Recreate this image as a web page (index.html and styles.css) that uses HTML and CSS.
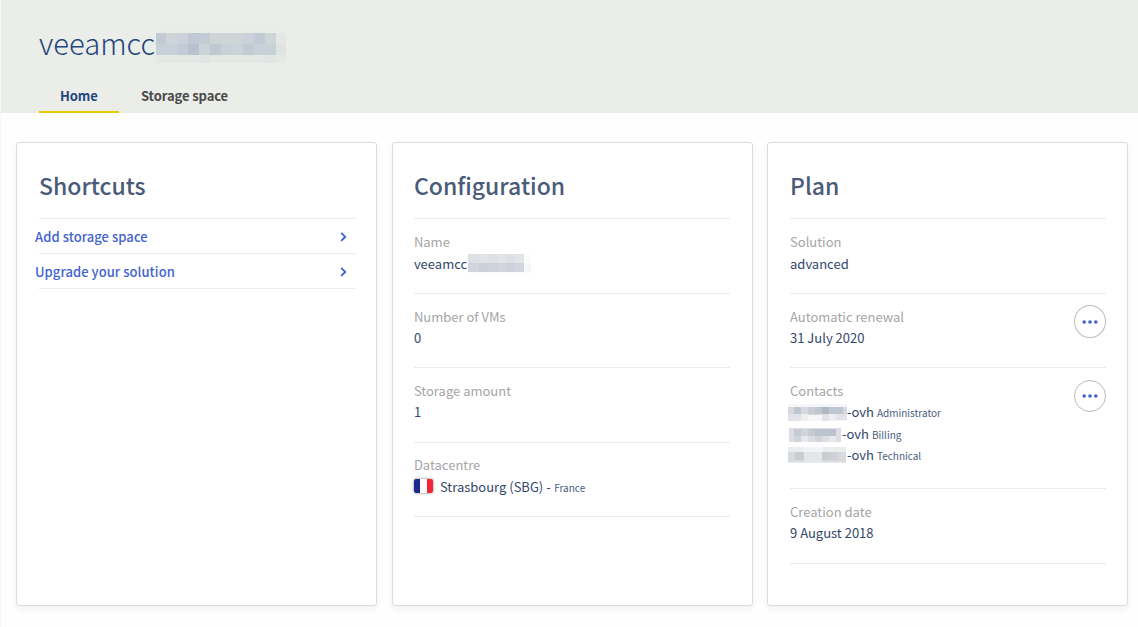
FILE: index.html
```html
<!DOCTYPE html>
<html lang="en">
<head>
<meta charset="utf-8">
<title>veeamcc</title>
<link rel="stylesheet" href="styles.css">
</head>
<body>
<header class="header">
  <h1 class="service">veeamcc<svg class="mask-title" width="130" height="37" viewBox="0 0 130 37" shape-rendering="crispEdges" aria-hidden="true">
    <path fill="#eaece8" d="M0 0h130v37H0z"/>
    <path fill="#e5e8e5" d="M0 29h130v8H0z"/>
    <path fill="#e1e5e3" d="M43 29h11v8H43zM109 29h11v8H109z"/>
    <path fill="#e4e7e6" d="M120 7h10v11h-10z"/>
    <path fill="#dfe3e2" d="M120 18h10v11h-10z"/>
    <path fill="#c8d0d8" d="M0 7h120v22H0z"/>
    <path fill="#c2cad4" d="M0 7h10v11H0zM98 7h11v11H98zM87 18h11v11H87z"/>
    <path fill="#cdd5d7" d="M10 7h11v11H10zM54 7h11v11H54zM65 7h11v11H65zM76 7h11v11H76zM109 7h11v11h-11z"/>
    <path fill="#cad1da" d="M21 7h11v11H21zM87 7h11v11H87z"/>
    <path fill="#c0c9d3" d="M32 7h11v11H32z"/>
    <path fill="#c3cbd6" d="M43 7h11v11H43zM21 18h11v11H21z"/>
    <path fill="#b7c2cf" d="M32 18h11v11H32z"/>
    <path fill="#cad3d7" d="M43 18h11v11H43zM76 18h11v11H76z"/>
    <path fill="#bfcad0" d="M54 18h11v11H54z"/>
  </svg></h1>
  <nav class="tabs">
    <a class="tab tab-active">Home</a>
    <a class="tab">Storage space</a>
  </nav>
</header>

<main class="cards">
  <section class="card">
    <h2 class="card-title">Shortcuts</h2>
    <a class="shortcut"><span>Add storage space</span><svg class="chevron" width="8" height="10" viewBox="0 0 8 10"><path d="M1.2 .9 5.2 4.9 1.2 8.9"/></svg></a>
    <a class="shortcut"><span>Upgrade your solution</span><svg class="chevron" width="8" height="10" viewBox="0 0 8 10"><path d="M1.2 .9 5.2 4.9 1.2 8.9"/></svg></a>
  </section>

  <section class="card card-middle">
    <h2 class="card-title">Configuration</h2>
    <dl class="row row-roomy">
      <dt>Name</dt>
      <dd>veeamcc<svg class="mask-name" width="63" height="19" viewBox="0 0 63 19" shape-rendering="crispEdges" aria-hidden="true">
        <path fill="#fbfbfc" d="M0 0h63v19H0z"/>
        <path fill="#f6f6f8" d="M56 10h8v8h-8z"/>
        <path fill="#dee0e5" d="M0 0h56v10H0z"/>
        <path fill="#e2e4e8" d="M11 0h9v10h-9zM29 0h9v10h-9zM47 0h9v10h-9z"/>
        <path fill="#d2d5de" d="M0 9h56v9H0z"/>
        <path fill="#cbd0d9" d="M11 9h9v9h-9z"/>
        <path fill="#cfd2dc" d="M20 9h9v9h-9zM38 9h9v9h-9z"/>
      </svg></dd>
    </dl>
    <dl class="row row-short"><dt>Number of VMs</dt><dd>0</dd></dl>
    <dl class="row"><dt>Storage amount</dt><dd>1</dd></dl>
    <dl class="row row-place">
      <dt>Datacentre</dt>
      <dd><span class="flag"></span>Strasbourg (SBG) - <small>France</small></dd>
    </dl>
  </section>

  <section class="card">
    <h2 class="card-title">Plan</h2>
    <dl class="row row-roomy"><dt>Solution</dt><dd>advanced</dd></dl>
    <div class="row row-short row-action">
      <dl><dt>Automatic renewal</dt><dd>31 July 2020</dd></dl>
      <button class="more more-raised" aria-label="Actions"><svg width="16" height="4" viewBox="0 0 16 4"><circle cx="2.2" cy="2" r="1.8"/><circle cx="8" cy="2" r="1.8"/><circle cx="13.8" cy="2" r="1.8"/></svg></button>
    </div>
    <div class="row row-contacts row-action">
      <dl>
        <dt>Contacts</dt>
        <dd class="contact"><svg class="mask-contact" width="59" height="17" viewBox="0 0 59 17" shape-rendering="crispEdges" aria-hidden="true">
          <path fill="#f5f6f7" d="M0 0h59v17H0z"/>
          <path fill="#d6d9df" d="M0 3h59v8H0z"/>
          <path fill="#c0c6cf" d="M6 3h7v7H6zM27 3h7v7h-7zM41 3h14v7H41z"/>
          <path fill="#c9ced6" d="M20 3h7v7h-7z"/>
          <path fill="#b1b8c4" d="M34 3h7v7h-7z"/>
          <path fill="#e2e3e8" d="M0 10h13v7H0zM34 10h7v7h-7zM48 10h11v6H48z"/>
          <path fill="#eceef0" d="M13 10h7v7h-7zM41 10h7v7h-7z"/>
        </svg>-ovh <small>Administrator</small></dd>
        <dd class="contact contact-tall"><svg class="mask-contact mask-billing" width="52" height="14" viewBox="0 0 52 14" shape-rendering="crispEdges" aria-hidden="true">
          <path fill="#dddee4" d="M0 0h52v14H0z"/>
          <path fill="#c5cad3" d="M5 1h7v7H5zM19 1h7v7h-7z"/>
          <path fill="#bcc3ce" d="M26 1h21v7H26z"/>
          <path fill="#d0d4db" d="M12 1h7v7h-7zM5 8h7v6H5zM26 8h7v6h-7z"/>
          <path fill="#e7e8ec" d="M12 8h7v6h-7zM40 8h7v6h-7z"/>
        </svg>-ovh <small>Billing</small></dd>
        <dd class="contact"><svg class="mask-contact mask-technical" width="59" height="17" viewBox="0 0 59 17" shape-rendering="crispEdges" aria-hidden="true">
          <path fill="#ebecee" d="M0 1h58v16H0z"/>
          <path fill="#f2f3f4" d="M15 1h20v5H15z"/>
          <path fill="#d8dae0" d="M0 6h58v10H0z"/>
          <path fill="#c8cdd2" d="M7 6h9v8H7zM34 6h9v8h-9z"/>
          <path fill="#e5e6e9" d="M16 6h9v10h-9zM25 6h9v10h-9z"/>
          <path fill="#cfd2d9" d="M43 6h8v8h-8z"/>
        </svg>-ovh <small>Technical</small></dd>
      </dl>
      <button class="more" aria-label="Actions"><svg width="16" height="4" viewBox="0 0 16 4"><circle cx="2.2" cy="2" r="1.8"/><circle cx="8" cy="2" r="1.8"/><circle cx="13.8" cy="2" r="1.8"/></svg></button>
    </div>
    <dl class="row"><dt>Creation date</dt><dd>9 August 2018</dd></dl>
  </section>
</main>
</body>
</html>
```
FILE: styles.css
```css
* { box-sizing: border-box; }

body {
  margin: 0;
  min-height: 627px;
  background: #fefefe;
  border-left: 1px solid #f8f8f9;
  font-family: "Noto Sans CJK SC", "Noto Sans", sans-serif;
  font-size: 13px;
  line-height: 21px;
  color: #33476a;
}

h1, h2, dl, dd { margin: 0; }

.header {
  display: flex;
  flex-direction: column;
  justify-content: space-between;
  height: 113px;
  margin-left: -1px;
  padding: 26px 0 0 38px;
  background: #ebede8;
  border-left: 1px solid #e6e9e6;
}

.service {
  display: flex;
  align-items: flex-start;
  height: 37px;
  font-size: 29.2px;
  font-weight: 300;
  line-height: 33px;
  color: #1f477d;
}

.mask-title { margin-left: 1px; }

.tabs { display: flex; }

.tab {
  height: 34px;
  padding: 0 22px;
  font-weight: 600;
  line-height: 34px;
  letter-spacing: -0.1px;
  color: #4a4a4a;
}

.tab-active {
  width: 80px;
  padding: 0 21px;
  color: #1f477d;
  border-bottom: 2px solid #e9c900;
}

.cards {
  display: flex;
  gap: 14.5px;
  padding: 29px 0 0 15px;
}

.card {
  width: 361px;
  height: 464px;
  padding: 0 21px 0 22px;
  background: #fff;
  border: 1px solid #dcdde3;
  border-radius: 3px;
  box-shadow: 0 3px 7px rgba(0, 0, 0, 0.06);
}

.card-middle { padding: 0 21.6px 0 21.4px; }

.card-title {
  height: 76px;
  padding-top: 25px;
  border-bottom: 1px solid #e9eaec;
  font-size: 23px;
  font-weight: 500;
  line-height: 34px;
  color: #4a5b78;
}

.shortcut {
  display: flex;
  justify-content: space-between;
  height: 35px;
  padding-right: 7px;
  border-bottom: 1px solid #e9eaec;
  font-weight: 500;
  line-height: 36px;
  letter-spacing: 0.06px;
  color: #4263d0;
}

.shortcut span { margin-left: -4px; }

.chevron { margin-top: 13px; }

.chevron path {
  fill: none;
  stroke: #3d62d2;
  stroke-width: 1.9;
}

.row {
  height: 75px;
  padding-top: 12px;
  border-bottom: 1px solid #e9eaec;
}

.row-short { height: 74px; }

.row-roomy dd { margin-top: 1px; }

.row-place {
  height: 74px;
  padding-top: 11px;
}

.row-place dd {
  display: flex;
  margin-top: 1px;
  white-space: pre;
}

.row-place small { margin-left: 0.6px; }

.row-contacts { height: 121px; }

.row-action {
  display: flex;
  justify-content: space-between;
}

dt { color: #a5a5a5; }

dd { display: flex; }

small {
  padding-top: 1px;
  font-size: 10px;
  color: #4b5c7e;
}

.mask-name { margin: 1px 0 0 1px; }

.flag {
  width: 19px;
  height: 14px;
  margin: 3px 7px 0 0;
  border-radius: 2px;
  background: linear-gradient(90deg, #20298c 33%, #fff 33% 66%, #f22735 66%);
  box-shadow: 0 0 3px rgba(0, 0, 0, 0.5);
}

.contact {
  height: 21px;
  white-space: pre;
}

.contact-tall {
  height: 22px;
  padding-top: 1px;
}

.mask-contact { margin: 3px 0 0 -2px; }

.mask-billing { margin: 5px 1px 0 -1px; }

.mask-technical { margin-top: 2px; }

.more {
  display: flex;
  align-items: center;
  justify-content: center;
  width: 32px;
  height: 32px;
  padding: 0;
  background: #fff;
  border: 1px solid #bcbcbc;
  border-radius: 50%;
  fill: #3d62d2;
}

.more-raised {
  height: 33px;
  margin-top: -1px;
}
```
